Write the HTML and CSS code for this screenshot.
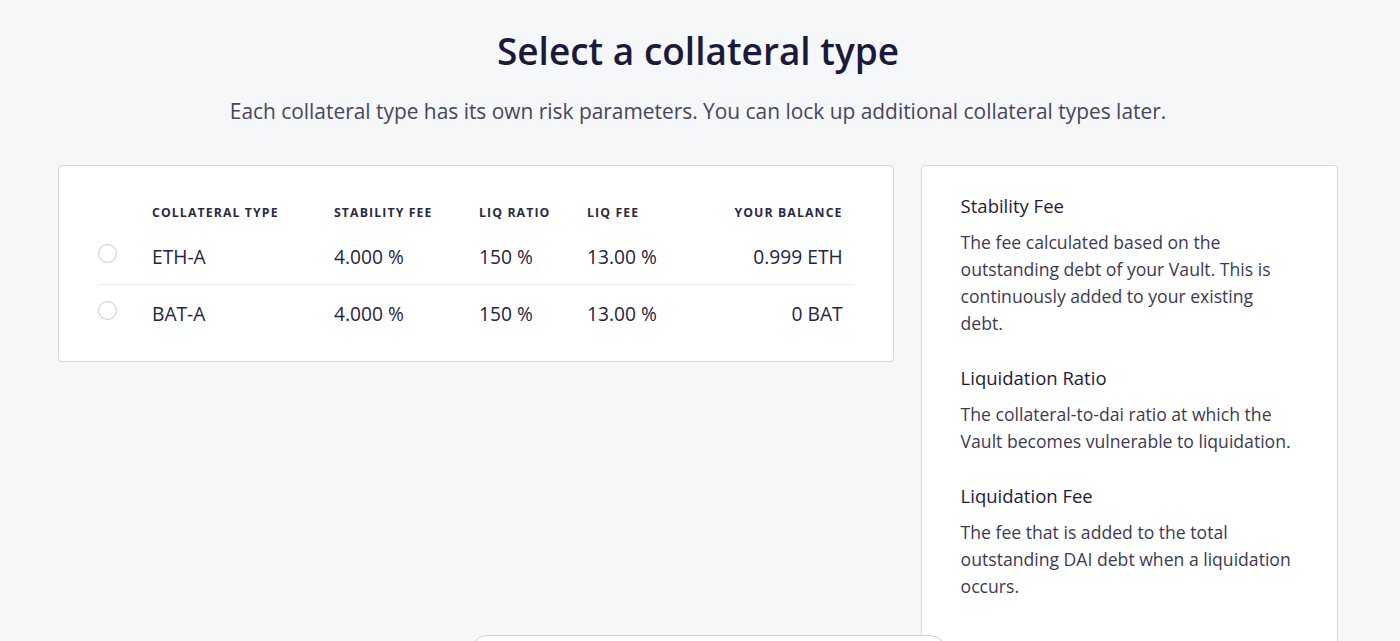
FILE: index.html
```html
<!DOCTYPE html>
<html lang="en">
<head>
<meta charset="utf-8">
<title>Select a collateral type</title>
<link rel="stylesheet" href="styles.css">
</head>
<body>
<main class="page">
  <header class="intro">
    <h1 class="title">Select a collateral type</h1>
    <p class="subtitle">Each collateral type has its own risk parameters. You can lock up additional collateral types later.</p>
  </header>
  <div class="columns">
    <section class="card table-card">
      <div class="grid head">
        <span></span>
        <span>Collateral type</span>
        <span>Stability fee</span>
        <span>Liq ratio</span>
        <span>Liq fee</span>
        <span class="right">Your balance</span>
      </div>
      <div class="grid row divided">
        <span class="radio"></span>
        <span>ETH-A</span>
        <span>4.000 %</span>
        <span>150 %</span>
        <span>13.00 %</span>
        <span class="right">0.999 ETH</span>
      </div>
      <div class="grid row">
        <span class="radio"></span>
        <span>BAT-A</span>
        <span>4.000 %</span>
        <span>150 %</span>
        <span>13.00 %</span>
        <span class="right">0 BAT</span>
      </div>
    </section>
    <aside class="card info-card">
      <div class="info">
        <h3 class="info-title">Stability Fee</h3>
        <p class="info-text">The fee calculated based on the outstanding debt of your Vault. This is continuously added to your existing debt.</p>
      </div>
      <div class="info">
        <h3 class="info-title">Liquidation Ratio</h3>
        <p class="info-text">The collateral-to-dai ratio at which the Vault becomes vulnerable to liquidation.</p>
      </div>
      <div class="info">
        <h3 class="info-title">Liquidation Fee</h3>
        <p class="info-text">The fee that is added to the total outstanding DAI debt when a liquidation occurs.</p>
      </div>
    </aside>
  </div>
</main>
<div class="footer-bar"></div>
</body>
</html>
```

FILE: styles.css
```css
* { box-sizing: border-box; }
html, body { margin: 0; padding: 0; }
body {
  background: #f6f7f9;
  font-family: "Open Sans", "Noto Sans", sans-serif;
  color: #231f3a;
  height: 641px;
  overflow: hidden;
}
.page {
  padding: 28px 62px 0 58px;
}
.intro {
  text-align: center;
}
.title {
  margin: 0;
  font-size: 37px;
  line-height: 46px;
  font-weight: 600;
  color: #1b1a3a;
}
.subtitle {
  margin: 23px 0 0;
  font-size: 20.9px;
  line-height: 28px;
  color: #47465c;
}
.columns {
  display: flex;
  gap: 27px;
  align-items: flex-start;
  margin-top: 40px;
}
.card {
  background: #fff;
  border: 1px solid #d5d8de;
  border-radius: 4px;
}
.table-card {
  width: 837px;
  padding: 36px 40px 20px 39px;
}
.grid {
  display: grid;
  grid-template-columns: 54px 182px 145px 108px 1fr auto;
  align-items: center;
}
.grid .right {
  text-align: right;
  padding-right: 10px;
  white-space: nowrap;
}
.head {
  height: 20px;
  font-size: 12.3px;
  font-weight: 700;
  letter-spacing: 1.1px;
  text-transform: uppercase;
  color: #2b2a44;
  margin-bottom: 8px;
}
.row {
  font-size: 19.2px;
  color: #262440;
  height: 56px;
}
.row.divided {
  height: 55px;
  border-bottom: 1px solid #ebedf0;
  padding-bottom: 2px;
}
.radio {
  width: 19px;
  height: 19px;
  border-radius: 50%;
  border: 1px solid #c8cbd2;
  background: #fff;
  margin-top: -6px;
}
.info-card {
  width: 418px;
  min-height: 520px;
  padding: 27px 42px 0 39px;
}
.info + .info { margin-top: 28px; }
.info-title {
  margin: 0;
  font-size: 18.5px;
  line-height: 26px;
  font-weight: 500;
  color: #1e1c36;
}
.info-text {
  margin: 10px 0 0;
  font-size: 17.6px;
  line-height: 27px;
  color: #3c3b52;
}
.footer-bar {
  position: fixed;
  left: 471px;
  top: 635px;
  width: 475px;
  height: 60px;
  background: #fff;
  border: 1px solid #cfd2d9;
  border-radius: 16px;
}
```
